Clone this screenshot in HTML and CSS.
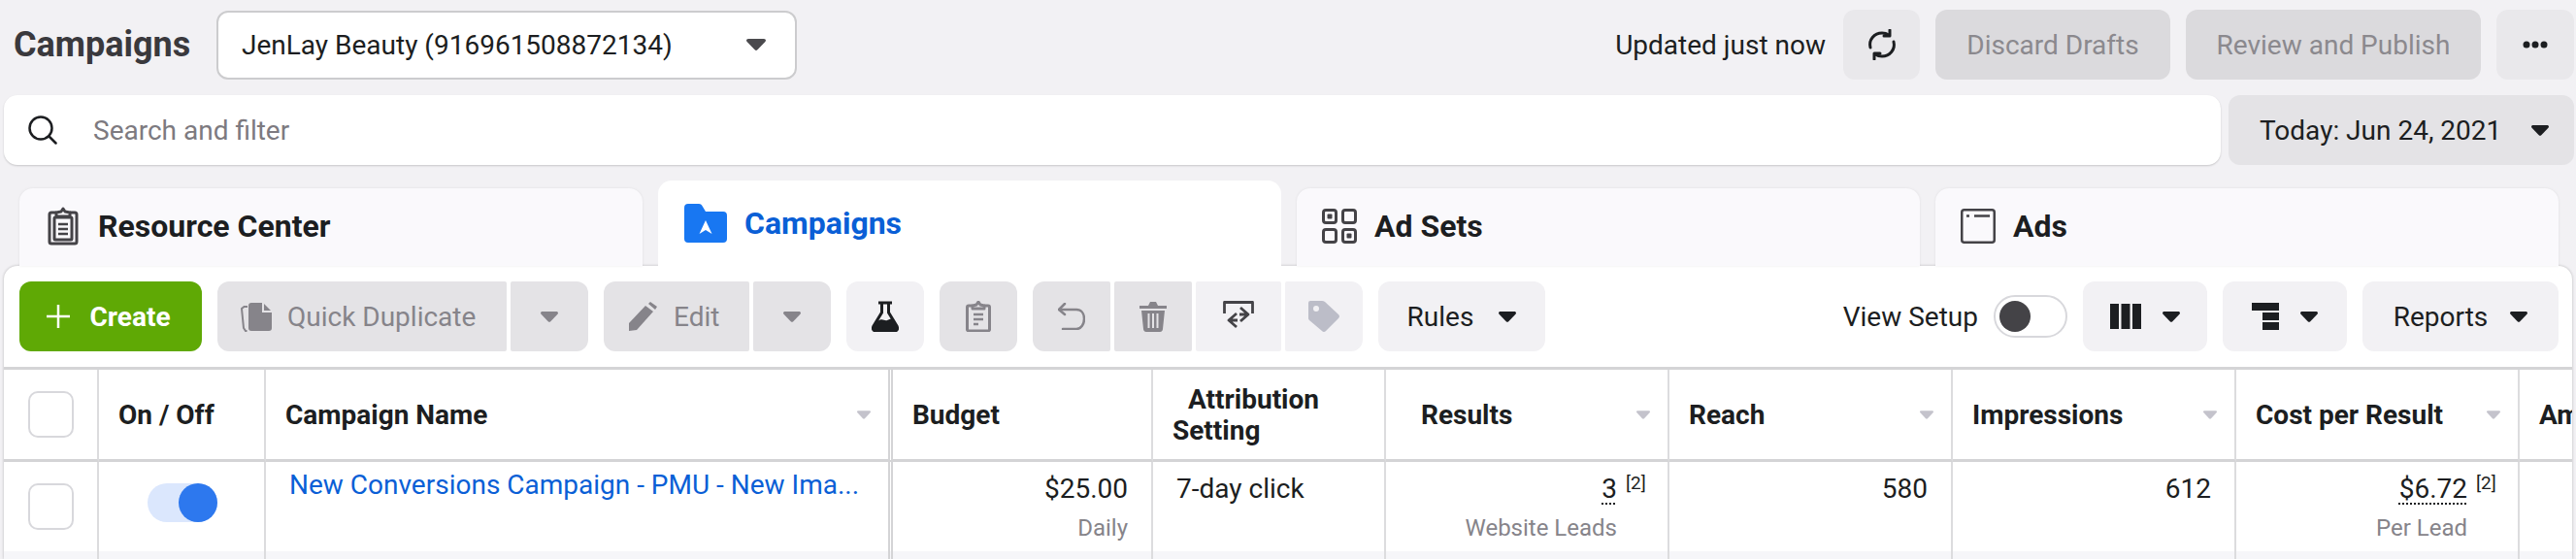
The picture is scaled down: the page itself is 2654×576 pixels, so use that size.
FILE: index.html
```html
<!DOCTYPE html>
<html lang="en">
<head>
    <meta charset="UTF-8">
    <title>Campaigns</title>
    <link rel="stylesheet" href="styles.css">
</head>
<body>
    <svg class="defs" width="0" height="0">
        <symbol id="caret" viewBox="0 0 20 12"><path d="M2 0h16c1.800 0 2.600 1.600 1.400 2.900l-8 8.400c-.8.800-2 .800-2.800 0l-8-8.400C-.6 1.600.2 0 2 0z"/></symbol>
    </svg>

    <header class="topbar">
        <h1 class="title">Campaigns</h1>
        <div class="account">
            <span>JenLay Beauty (916961508872134)</span>
            <svg class="caret dark-grey"><use href="#caret"/></svg>
        </div>
        <div class="top-actions">
            <span class="updated">Updated just now</span>
            <button class="btn icon-btn refresh">
                <svg width="32" height="32" viewBox="0 0 32 32" fill="none" stroke="#1c1e21" stroke-width="3" stroke-linecap="round" stroke-linejoin="round">
                    <path d="M4 19C2 11 8 4 16 4c2.500 0 5 .7 7 2"/>
                    <path d="M28 13c2 8-4 15-12 15-2.500 0-5-.7-7-2"/>
                    <path d="M24 1v6h-6"/>
                    <path d="M8 31v-6h6"/>
                </svg>
            </button>
            <button class="btn disabled discard">Discard Drafts</button>
            <button class="btn disabled review">Review and Publish</button>
            <button class="btn icon-btn more">
                <svg width="26" height="8" viewBox="0 0 26 8" fill="#1c1e21"><circle cx="4" cy="4" r="3.500"/><circle cx="13" cy="4" r="3.500"/><circle cx="22" cy="4" r="3.500"/></svg>
            </button>
        </div>
    </header>

    <div class="search-row">
        <div class="search">
            <svg width="30" height="30" viewBox="0 0 30 30" fill="none" stroke="#1c1e21" stroke-width="2.500" stroke-linecap="round"><circle cx="13" cy="13" r="11.500"/><path d="M21.500 21.500l7 7"/></svg>
            <span>Search and filter</span>
        </div>
        <button class="btn date">
            <span>Today: Jun 24, 2021</span>
            <svg class="caret"><use href="#caret"/></svg>
        </button>
    </div>

    <nav class="tabs">
        <div class="tab resource">
            <svg width="32" height="40" viewBox="0 0 32 40" fill="none" stroke="#444347" stroke-width="3" stroke-linejoin="round">
                <path d="M9 6H4a2 2 0 0 0-2 2v28a2 2 0 0 0 2 2h24a2 2 0 0 0 2-2V8a2 2 0 0 0-2-2h-5"/>
                <path d="M9 10V6l5-1 2-3 2 3 5 1v4z"/>
                <rect x="7" y="11" width="18" height="23" rx="1"/>
                <path d="M11 18h10M11 23h10M11 28h10" stroke-width="2.500"/>
            </svg>
            <span>Resource Center</span>
        </div>
        <div class="tab active">
            <svg width="44" height="40" viewBox="0 0 44 40">
                <path fill="#1877f2" d="M0 4a4 4 0 0 1 4-4h11c2 0 3 1 4 3l3 5h18a4 4 0 0 1 4 4v24a4 4 0 0 1-4 4H4a4 4 0 0 1-4-4z"/>
                <path fill="#fff" d="M22 17l6.500 14-6.500-4-6.500 4z"/>
            </svg>
            <span>Campaigns</span>
        </div>
        <div class="tab">
            <svg width="36" height="36" viewBox="0 0 36 36" fill="none" stroke="#444347" stroke-width="3">
                <rect x="1.500" y="1.500" width="13" height="13" rx="2.500"/>
                <rect x="21.500" y="1.500" width="13" height="13" rx="2.500"/>
                <rect x="1.500" y="21.500" width="13" height="13" rx="2.500"/>
                <rect x="21.500" y="21.500" width="13" height="13" rx="2.500"/>
                <rect x="5.500" y="5.500" width="5" height="5" rx="1" fill="#444347" stroke="none"/>
                <rect x="25.500" y="25.500" width="5" height="5" rx="1" fill="#444347" stroke="none"/>
            </svg>
            <span>Ad Sets</span>
        </div>
        <div class="tab">
            <svg width="36" height="36" viewBox="0 0 36 36" fill="none" stroke="#444347" stroke-width="2.500">
                <rect x="1.250" y="1.250" width="33.500" height="33.500" rx="2.500"/>
                <path d="M14 7.500h16M6 7.500h3"/>
            </svg>
            <span>Ads</span>
        </div>
    </nav>

    <main class="panel">
        <div class="toolbar">
            <button class="btn create">
                <svg width="24" height="24" viewBox="0 0 24 24" stroke="#fff" stroke-width="2.500"><path d="M12 0v24M0 12h24"/></svg>
                <span>Create</span>
            </button>
            <div class="group">
                <button class="btn muted left dup">
                    <svg width="32" height="32" viewBox="0 0 32 32" fill="#86848a">
                        <path d="M11 2h12l9 9v17a3 3 0 0 1-3 3H11a3 3 0 0 1-3-3V5a3 3 0 0 1 3-3z"/>
                        <path d="M7 6H3.500L1 8l2 20 2 3h1.500" fill="none" stroke="#86848a" stroke-width="2"/>
                        <path d="M23 2v9h9" fill="none" stroke="#e4e3e6" stroke-width="2"/>
                    </svg>
                    <span>Quick Duplicate</span>
                </button>
                <button class="btn muted right arrow-btn"><svg class="caret grey"><use href="#caret"/></svg></button>
            </div>
            <div class="group">
                <button class="btn muted left edit">
                    <svg width="30" height="30" viewBox="0 0 30 30" fill="#86848a"><path d="M0 22L17 4l8 6L8 29l-8 1z"/><path d="M20 2l2-2 7 5-2 3z"/></svg>
                    <span>Edit</span>
                </button>
                <button class="btn muted right arrow-btn"><svg class="caret grey"><use href="#caret"/></svg></button>
            </div>
            <button class="btn light square">
                <svg width="28" height="32" viewBox="0 0 28 32">
                    <path d="M10.500 2v10L2 26c-1.500 3 0 5 3 5h18c3 0 4.500-2 3-5l-8.500-14V2" fill="none" stroke="#1c1e21" stroke-width="3"/>
                    <path d="M7 2h14" stroke="#1c1e21" stroke-width="3"/>
                    <path d="M6 21c5-4 7 0 10-1l5-2 6 10-3 4H4l-3-4z" fill="#1c1e21"/>
                </svg>
            </button>
            <button class="btn muted square">
                <svg width="26" height="32" viewBox="0 0 26 32" fill="none" stroke="#86848a" stroke-width="3" stroke-linejoin="round">
                    <path d="M7 5H3a1.500 1.500 0 0 0-1.500 1.500v23A1.500 1.500 0 0 0 3 31h20a1.500 1.500 0 0 0 1.500-1.500v-23A1.500 1.500 0 0 0 23 5h-4"/>
                    <path d="M7 8V5l4-1 2-3 2 3 4 1v3z"/>
                    <path d="M8 14h10M8 19h10M8 24h5" stroke-width="2.500"/>
                </svg>
            </button>
            <div class="group">
                <button class="btn muted left square">
                    <svg width="28" height="28" viewBox="0 0 28 28" fill="none" stroke="#86848a" stroke-width="2.500" stroke-linecap="round" stroke-linejoin="round"><path d="M7 1L1 7l6 5"/><path d="M1 7h18c5 0 8 4 8 9.500S24 27 19 27H5"/></svg>
                </button>
                <button class="btn muted mid square">
                    <svg width="28" height="32" viewBox="0 0 28 32" fill="#86848a"><path d="M0 5h9l2-4h6l2 4h9v3H0z"/><path d="M2 10h24l-2 19c0 1.500-1 3-3 3H7c-2 0-3-1.500-3-3z"/><path d="M9.500 13v15M14 13v15M18.500 13v15" stroke="#e4e3e6" stroke-width="2"/></svg>
                </button>
                <button class="btn light mid wide">
                    <svg width="32" height="32" viewBox="0 0 32 32" fill="none" stroke="#444347" stroke-width="2.800" stroke-linejoin="round"><path d="M1.500 13V1.500h29V13"/><path d="M14 13l-8 7 8 7M6 20h9"/><path d="M18 7l8 7-8 7M26 14h-9"/></svg>
                </button>
                <button class="btn light right square">
                    <svg width="32" height="32" viewBox="0 0 32 32"><path fill="#bcbdc8" d="M2 0h12c1 0 2 .4 3 1l14 13c1.300 1 1.300 3 0 4L18 31c-1 1.200-3 1.200-4 0L1 20c-.7-.6-1-1.400-1-2V2a2 2 0 0 1 2-2z"/><circle cx="8" cy="8" r="3" fill="#f2f1f4"/></svg>
                </button>
            </div>
            <button class="btn light rules">
                <span>Rules</span>
                <svg class="caret"><use href="#caret"/></svg>
            </button>

            <div class="toolbar-right">
                <span class="view-label">View Setup</span>
                <div class="switch"><span class="switch-knob"></span></div>
                <button class="btn light menu">
                    <svg width="32" height="26" viewBox="0 0 32 26" fill="#1c1e21"><rect width="9" height="26"/><rect x="11.500" width="9" height="26"/><rect x="23" width="9" height="26"/></svg>
                    <svg class="caret"><use href="#caret"/></svg>
                </button>
                <button class="btn light menu">
                    <svg width="28" height="28" viewBox="0 0 28 28" fill="#1c1e21"><rect width="28" height="8"/><rect x="11" y="10" width="17" height="8"/><rect x="11" y="20" width="17" height="8"/></svg>
                    <svg class="caret"><use href="#caret"/></svg>
                </button>
                <button class="btn light reports">
                    <span>Reports</span>
                    <svg class="caret"><use href="#caret"/></svg>
                </button>
            </div>
        </div>

        <div class="table">
            <div class="cell head center"><span class="checkbox"></span></div>
            <div class="cell head">On / Off</div>
            <div class="cell head freeze">Campaign Name<svg class="sort"><use href="#caret"/></svg></div>
            <div class="cell head">Budget</div>
            <div class="cell head attribution">Attribution Setting</div>
            <div class="cell head results-head">Results<svg class="sort"><use href="#caret"/></svg></div>
            <div class="cell head">Reach<svg class="sort"><use href="#caret"/></svg></div>
            <div class="cell head">Impressions<svg class="sort"><use href="#caret"/></svg></div>
            <div class="cell head">Cost per Result<svg class="sort"><use href="#caret"/></svg></div>
            <div class="cell head last">Amount Spent</div>

            <div class="cell data check-cell"><span class="checkbox"></span></div>
            <div class="cell data toggle-cell"><div class="toggle"><span class="toggle-knob"></span></div></div>
            <div class="cell data name-cell freeze"><a class="campaign-link">New Conversions Campaign - PMU - New Ima...</a></div>
            <div class="cell data num"><span class="val">$25.00</span><span class="sub">Daily</span></div>
            <div class="cell data text-cell">7-day click</div>
            <div class="cell data num note-cell"><span class="val"><u>3</u><sup>[2]</sup></span><span class="sub">Website Leads</span></div>
            <div class="cell data num"><span class="val">580</span></div>
            <div class="cell data num"><span class="val">612</span></div>
            <div class="cell data num note-cell"><span class="val"><u>$6.72</u><sup>[2]</sup></span><span class="sub">Per Lead</span></div>
            <div class="cell data last"></div>

            <div class="cell foot"></div>
            <div class="cell foot"></div>
            <div class="cell foot freeze"></div>
            <div class="cell foot"></div>
            <div class="cell foot"></div>
            <div class="cell foot"></div>
            <div class="cell foot"></div>
            <div class="cell foot"></div>
            <div class="cell foot"></div>
            <div class="cell foot last"></div>
        </div>
    </main>
</body>
</html>
```

FILE: styles.css
```css
* {
    box-sizing: border-box;
}
body {
    margin: 0;
    height: 576px;
    overflow: hidden;
    background: #f2f1f4;
    color: #1c1e21;
    font-family: Roboto, "Liberation Sans", sans-serif;
    font-size: 28px;
}
.defs {
    display: block;
    height: 0;
}
button {
    font: inherit;
    border: none;
    color: inherit;
    padding: 0;
}
.caret {
    width: 18px;
    height: 11px;
    fill: #1c1e21;
    flex: none;
}
.caret.grey {
    fill: #86848a;
}
.caret.dark-grey {
    width: 20px;
    height: 12px;
    fill: #4b4a4e;
}

/* buttons */
.btn {
    height: 72px;
    border-radius: 12px;
    display: flex;
    align-items: center;
    justify-content: center;
    flex: none;
}
.disabled {
    background: #dbdadd;
    color: #8b898e;
}
.muted {
    background: #e4e3e6;
    color: #86848a;
}
.light {
    background: #f2f1f4;
}
.icon-btn {
    background: #e9e8eb;
}
.square {
    width: 80px;
}
.wide {
    width: 88px;
}
.left {
    border-radius: 12px 2px 2px 12px;
}
.mid {
    border-radius: 2px;
}
.right {
    border-radius: 2px 12px 12px 2px;
}
.group {
    display: flex;
    gap: 4px;
}

/* top bar */
.topbar {
    height: 98px;
    padding: 10px 2px 16px 14px;
    display: flex;
    align-items: center;
}
.title {
    margin: 0;
    width: 209px;
    font-size: 36px;
    font-weight: 700;
    color: #3a393d;
}
.account {
    width: 598px;
    height: 71px;
    padding: 0 30px 0 24px;
    background: #fff;
    border: 2px solid #ccccce;
    border-radius: 12px;
    display: flex;
    align-items: center;
    justify-content: space-between;
}
.top-actions {
    margin-left: auto;
    display: flex;
    align-items: center;
    gap: 16px;
}
.updated {
    margin-right: 2px;
}
.refresh {
    width: 79px;
}
.discard {
    width: 242px;
}
.review {
    width: 304px;
}
.more {
    width: 80px;
}

/* search */
.search-row {
    height: 72px;
    margin: 0 2px 0 4px;
    display: flex;
    gap: 8px;
}
.search {
    flex: 1;
    background: #fff;
    border-radius: 14px;
    box-shadow: 0 1px 2px rgba(0, 0, 0, 0.18);
    padding-left: 25px;
    display: flex;
    align-items: center;
    gap: 37px;
    color: #7d7a80;
}
.date {
    width: 356px;
    background: #e4e3e6;
    padding: 0 26px 0 32px;
    justify-content: space-between;
}

/* tabs */
.tabs {
    height: 88px;
    margin-top: 16px;
    padding-left: 20px;
    display: flex;
    align-items: flex-end;
    gap: 16px;
}
.tab {
    width: 642px;
    height: 80px;
    padding: 0 0 2px 26px;
    background: #faf9fc;
    border-radius: 14px 14px 0 0;
    box-shadow: 0 0 3px rgba(0, 0, 0, 0.08);
    display: flex;
    align-items: center;
    gap: 18px;
    font-size: 32px;
    font-weight: 700;
}
.tab.resource {
    padding-left: 29px;
    gap: 20px;
}
.tab.active {
    position: relative;
    z-index: 1;
    height: 88px;
    padding: 0 0 0 27px;
    background: #fff;
    color: #0a5fd6;
    box-shadow: none;
}

/* panel */
.panel {
    height: 302px;
    margin: 0 4px;
    background: #fff;
    border-radius: 14px 14px 0 0;
    box-shadow: 0 0 3px rgba(0, 0, 0, 0.25);
    overflow: hidden;
}
.toolbar {
    height: 104px;
    padding: 16px 14px 16px 16px;
    display: flex;
    gap: 16px;
}
.create {
    width: 188px;
    padding-right: 4px;
    background: #5fa905;
    color: #fff;
    font-weight: 700;
    gap: 20px;
}
.dup {
    width: 298px;
    padding-left: 24px;
    justify-content: flex-start;
    gap: 16px;
}
.edit {
    width: 150px;
    padding-left: 26px;
    justify-content: flex-start;
    gap: 16px;
}
.arrow-btn {
    width: 80px;
}
.rules {
    width: 172px;
    gap: 26px;
}
.toolbar-right {
    margin-left: auto;
    display: flex;
    align-items: center;
    gap: 16px;
}
.switch {
    width: 76px;
    height: 44px;
    padding: 4px;
    background: #fff;
    border: 2px solid #d8d8dc;
    border-radius: 22px;
}
.switch-knob {
    display: block;
    width: 32px;
    height: 32px;
    border-radius: 50%;
    background: #444347;
}
.menu {
    width: 128px;
    gap: 22px;
}
.reports {
    width: 202px;
    gap: 23px;
}

/* table */
.table {
    border-top: 3px solid #d4d4d6;
    display: grid;
    grid-template-columns: 98px 172px 646px 268px 240px 292px 292px 292px 292px 1fr;
    grid-template-rows: 95px 92px 24px;
}
.cell {
    border-right: 2px solid #dcdcde;
    white-space: nowrap;
    overflow: hidden;
}
.cell.last {
    border-right: none;
}
.freeze {
    border-right: 5px double #d4d4d6;
}
.head {
    border-bottom: 3px solid #d4d4d6;
    padding: 0 18px 0 20px;
    display: flex;
    align-items: center;
    justify-content: space-between;
    font-weight: 700;
}
.head.center {
    padding: 0 0 0 25px;
}
.attribution {
    display: block;
    padding: 15px 60px 0 20px;
    white-space: normal;
    line-height: 32px;
    text-indent: 16px;
}
.results-head {
    padding-left: 36px;
}
.sort {
    width: 14px;
    height: 9px;
    fill: #c4c3cc;
    flex: none;
}
.foot {
    background: #f6f6f9;
}
.checkbox {
    display: block;
    width: 47px;
    height: 48px;
    border: 2px solid #d8d8dc;
    border-radius: 10px;
    background: #fff;
}
.check-cell {
    padding: 22px 0 0 25px;
}
.toggle-cell {
    padding: 22px 0 0 50px;
}
.toggle {
    width: 72px;
    height: 40px;
    border-radius: 20px;
    background: #dbe7fd;
    display: flex;
    justify-content: flex-end;
}
.toggle-knob {
    width: 40px;
    height: 40px;
    border-radius: 50%;
    background: #2d78ee;
}
.name-cell {
    padding: 6px 0 0 24px;
    line-height: 36px;
}
.campaign-link {
    color: #0a5fd6;
}
.text-cell {
    padding: 10px 0 0 24px;
    line-height: 36px;
}
.num {
    padding: 10px 24px 0 0;
    display: flex;
    flex-direction: column;
    align-items: flex-end;
}
.note-cell {
    padding-right: 52px;
}
.val {
    position: relative;
    line-height: 36px;
}
.val u {
    text-decoration: underline dotted 2px;
    text-underline-offset: 5px;
}
.val sup {
    position: absolute;
    left: 100%;
    top: -2px;
    margin-left: 9px;
    font-size: 19px;
    line-height: 28px;
}
.sub {
    margin-top: 7px;
    font-size: 24px;
    line-height: 30px;
    color: #86848a;
}
```
